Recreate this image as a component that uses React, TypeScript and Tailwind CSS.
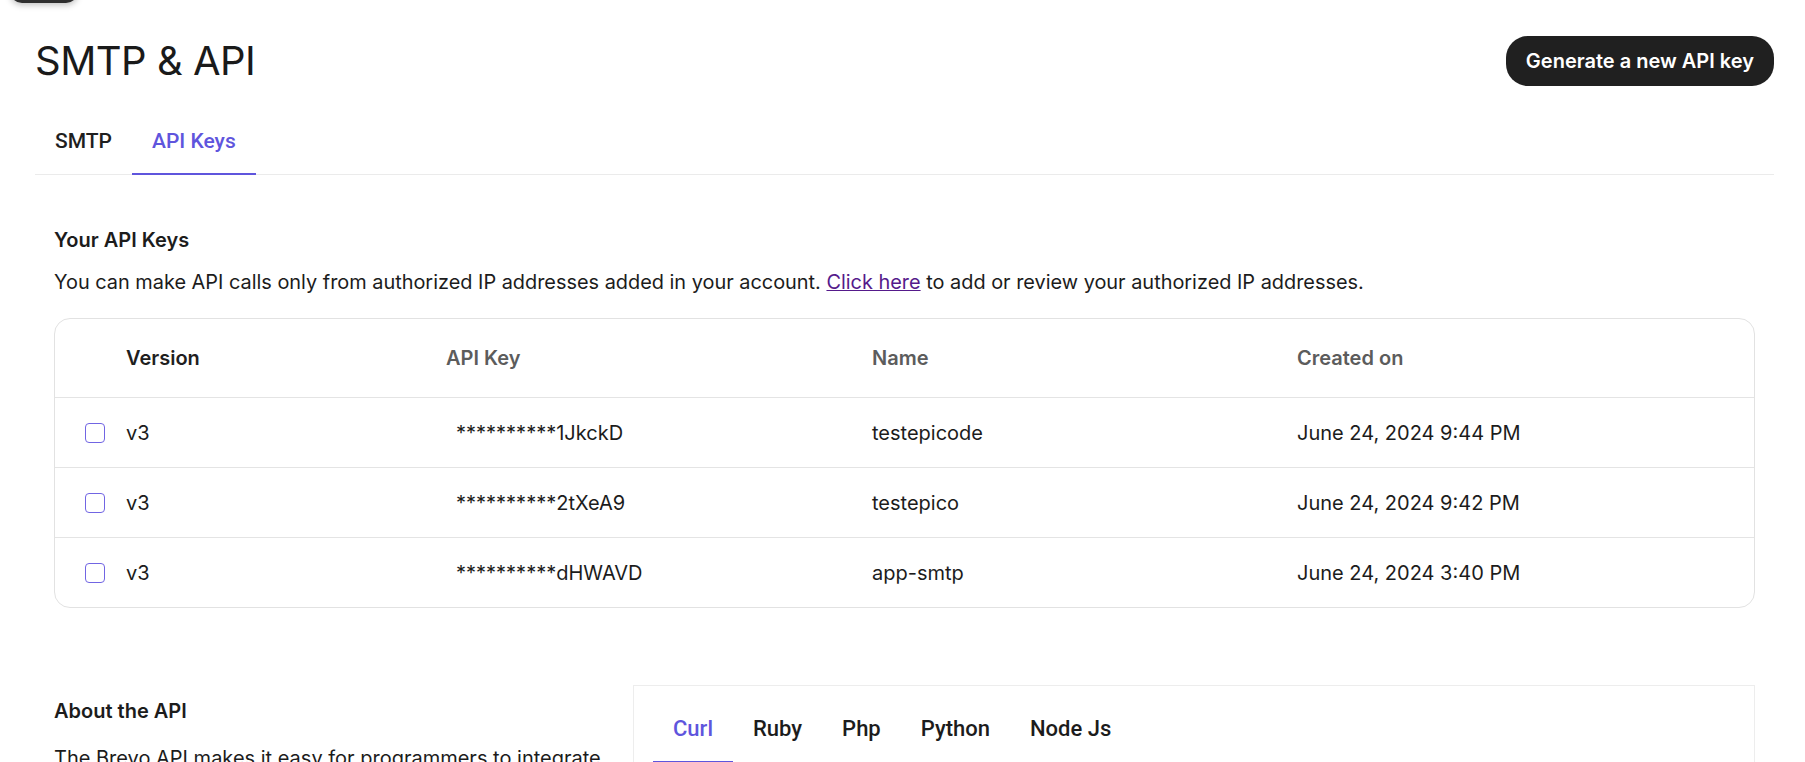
import React from "react";

const rows = [
  { v: "v3", key: "**********1JkckD", name: "testepicode", date: "June 24, 2024 9:44 PM" },
  { v: "v3", key: "**********2tXeA9", name: "testepico", date: "June 24, 2024 9:42 PM" },
  { v: "v3", key: "**********dHWAVD", name: "app-smtp", date: "June 24, 2024 3:40 PM" },
];

export default function App() {
  return (
    <div className="relative min-h-screen overflow-hidden bg-white pl-[35px] pr-[31px] font-['Inter',sans-serif] text-[#1c1c1c]">
      <div className="absolute left-[10px] top-[-40px] h-[43px] w-[68px] rounded-[12px] bg-[#2f2f2f] shadow-[0_2px_6px_rgba(0,0,0,0.25)]" />

      <div className="flex items-center justify-between pt-[36px]">
        <h1 className="text-[40px] font-normal leading-[50px] tracking-[-0.5px] text-[#1a1a1a]">SMTP &amp; API</h1>
        <button className="h-[50px] rounded-[22px] bg-[#202020] px-[20px] text-[20px] font-semibold text-white">
          Generate a new API key
        </button>
      </div>

      <div className="mt-[43px] flex border-b border-[#ebebeb] font-['Roboto',sans-serif] text-[21px] font-medium leading-[24px]">
        <div className="px-[20px] pb-[21px] text-[#1f1f1f]">SMTP</div>
        <div className="-mb-px border-b-2 border-[#5f55dd] px-[20px] pb-[20px] text-[#5f55dd]">API Keys</div>
      </div>

      <div className="px-[19px]">
        <h2 className="mt-[53px] text-[20px] font-semibold leading-[24px]">Your API Keys</h2>
        <p className="mt-[18px] text-[19.9px] leading-[24px]">
          You can make API calls only from authorized IP addresses added in your account.{" "}
          <a className="text-[#551a8b] underline">Click here</a> to add or review your authorized IP addresses.
        </p>

        <div className="mt-[24px] overflow-hidden rounded-[16px] border border-[#e2e2e2]">
          <div className="grid h-[78px] grid-cols-[71px_320px_426px_425px_1fr] items-center text-[20px] font-semibold">
            <div />
            <div className="text-[#1f1f1f]">Version</div>
            <div className="text-[#5c5c5c]">API Key</div>
            <div className="text-[#5c5c5c]">Name</div>
            <div className="text-[#5c5c5c]">Created on</div>
          </div>
          {rows.map((r) => (
            <div
              key={r.key}
              className="grid h-[70px] grid-cols-[71px_320px_426px_425px_1fr] items-center border-t border-[#e4e4e4] text-[20px]"
            >
              <div className="flex pl-[30px]">
                <div className="h-[20px] w-[20px] rounded-[4px] border-[1.5px] border-[#7165e3]" />
              </div>
              <div>{r.v}</div>
              <div className="pl-[10px]">{r.key}</div>
              <div>{r.name}</div>
              <div>{r.date}</div>
            </div>
          ))}
        </div>

        <div className="mt-[77px] flex gap-[23px]">
          <div className="w-[556px] shrink-0 pt-[14px]">
            <h3 className="text-[20px] font-semibold leading-[24px]">About the API</h3>
            <p className="mt-[21px] text-[20px] leading-[28px]">
              The Brevo API makes it easy for programmers to integrate many of Brevo's features into other applications.
            </p>
          </div>
          <div className="flex-1 border border-[#ededed] px-[19px]">
            <div className="mt-[31px] flex border-b border-[#e6e6e6] font-['Roboto',sans-serif] text-[22px] font-medium leading-[24px]">
              <div className="-mb-px border-b-[3px] border-[#5f55dd] px-[20px] pb-[20px] text-[#5f55dd]">Curl</div>
              <div className="px-[20px] pb-[20px]">Ruby</div>
              <div className="px-[20px] pb-[20px]">Php</div>
              <div className="px-[20px] pb-[20px]">Python</div>
              <div className="px-[20px] pb-[20px]">Node Js</div>
            </div>
            <div className="h-[200px]" />
          </div>
        </div>
      </div>
    </div>
  );
}
